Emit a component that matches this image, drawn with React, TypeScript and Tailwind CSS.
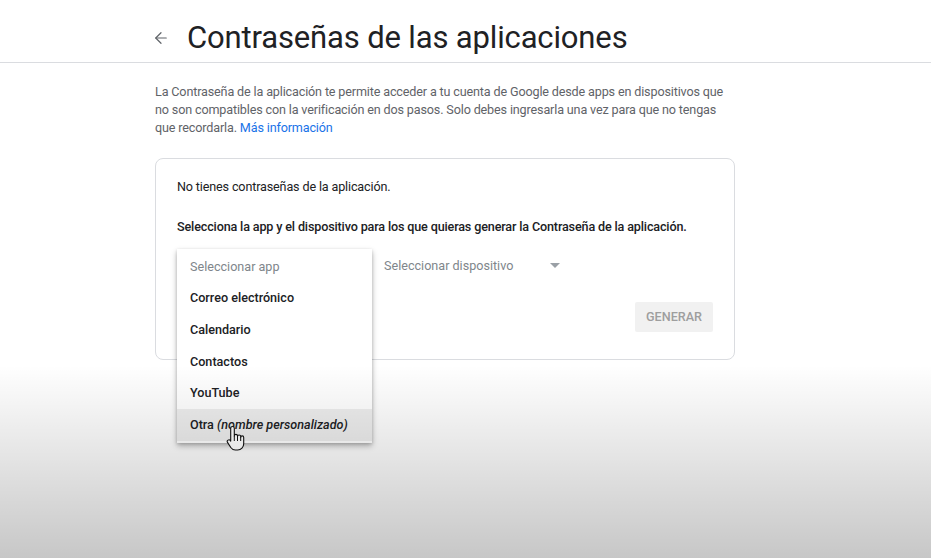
import { ArrowLeft } from "lucide-react";

const apps = ["Correo electrónico", "Calendario", "Contactos", "YouTube"];

function HandCursor() {
  return (
    <svg
      className="pointer-events-none absolute left-[226px] top-[425px] z-30"
      width="20"
      height="26"
      viewBox="0 0 20 26"
    >
      <path
        d="M6.5 1.5c1 0 1.8.8 1.8 1.8V11c0-.9.7-1.6 1.6-1.6s1.6.7 1.6 1.6v.6c0-.9.7-1.6 1.6-1.6s1.6.7 1.6 1.6v.8c0-.8.7-1.5 1.5-1.5s1.5.7 1.5 1.5v6.4c0 3.5-2.6 6.200-6 6.2H9.3c-1.9 0-3.4-.9-4.5-2.5l-3.3-5.1c-.5-.8-.3-1.8.5-2.3.8-.5 1.8-.3 2.3.4l.4.6V3.3c0-1 .8-1.8 1.8-1.8z"
        fill="#fff"
        stroke="#111"
        strokeWidth="1.1"
        strokeLinejoin="round"
      />
      <path d="M8.3 11v5M11.5 11.6v4.4M14.7 12.4v3.6" stroke="#111" strokeWidth="1" />
    </svg>
  );
}

export default function App() {
  return (
    <div
      className="relative h-[558px] w-[931px] overflow-hidden bg-white text-[#202124]"
      style={{ fontFamily: "Roboto, 'Liberation Sans', sans-serif" }}
    >
      <header className="flex h-[63px] items-center border-b border-[#dadce0] pl-[152px] pt-[13px]">
        <ArrowLeft className="h-[18px] w-[18px] text-[#5f6368]" strokeWidth={1.6} />
        <h1 className="ml-[17px] text-[31px] leading-none tracking-[-0.15px] text-[#202124]">
          Contraseñas de las aplicaciones
        </h1>
      </header>

      <main className="ml-[155px] w-[580px]">
        <p className="mt-[20px] text-[12.6px] leading-[18px] text-[#5f6368] tracking-[-0.15px]">
          La Contraseña de la aplicación te permite acceder a tu cuenta de Google desde apps en
          dispositivos que no son compatibles con la verificación en dos pasos. Solo debes
          ingresarla una vez para que no tengas que recordarla.{" "}
          <span className="text-[#1a73e8]">Más información</span>
        </p>

        <section className="relative mt-[21px] h-[202px] rounded-lg border border-[#dadce0] px-[21px] pt-[19px]">
          <p className="text-[12.6px] leading-[18px] tracking-[-0.15px]">
            No tienes contraseñas de la aplicación.
          </p>
          <p className="mt-[22px] text-[12.6px] font-medium leading-[18px] tracking-[-0.15px]">
            Selecciona la app y el dispositivo para los que quieras generar la Contraseña de la
            aplicación.
          </p>

          <div className="mt-[14px] flex h-[32px] items-center text-[12.6px] text-[#80868b]">
            <div className="relative w-[207px]">
              <div className="absolute -top-[17px] left-0 z-20 w-[195px] bg-white py-[2px] shadow-[0_3px_6px_rgba(0,0,0,0.28),0_1px_3px_rgba(0,0,0,0.14)]">
                <div className="flex h-[32px] items-center px-[13px] text-[#80868b]">
                  Seleccionar app
                </div>
                {apps.map((a) => (
                  <div key={a} className="flex h-[31.6px] items-center px-[13px] font-medium text-[#202124]">
                    {a}
                  </div>
                ))}
                <div className="flex h-[31.6px] items-center bg-[#eeeeee] px-[13px] font-medium text-[#202124]">
                  Otra&nbsp;<i>(nombre personalizado)</i>
                </div>
              </div>
            </div>
            <div className="flex w-[180px] items-center justify-between pr-[4px]">
              <span>Seleccionar dispositivo</span>
              <span className="h-0 w-0 border-x-[5px] border-t-[5px] border-x-transparent border-t-[#9aa0a6]" />
            </div>
          </div>

          <div className="mt-[20px] flex justify-end">
            <button className="h-[30px] w-[78px] rounded-[2px] bg-[#f1f1f1] text-[12.6px] font-medium text-[#9e9e9e]">
              GENERAR
            </button>
          </div>
        </section>
      </main>

      <HandCursor />

      <div className="pointer-events-none absolute inset-x-0 bottom-0 top-[365px] z-40 bg-gradient-to-b from-transparent to-black/[0.22]" />
    </div>
  );
}
